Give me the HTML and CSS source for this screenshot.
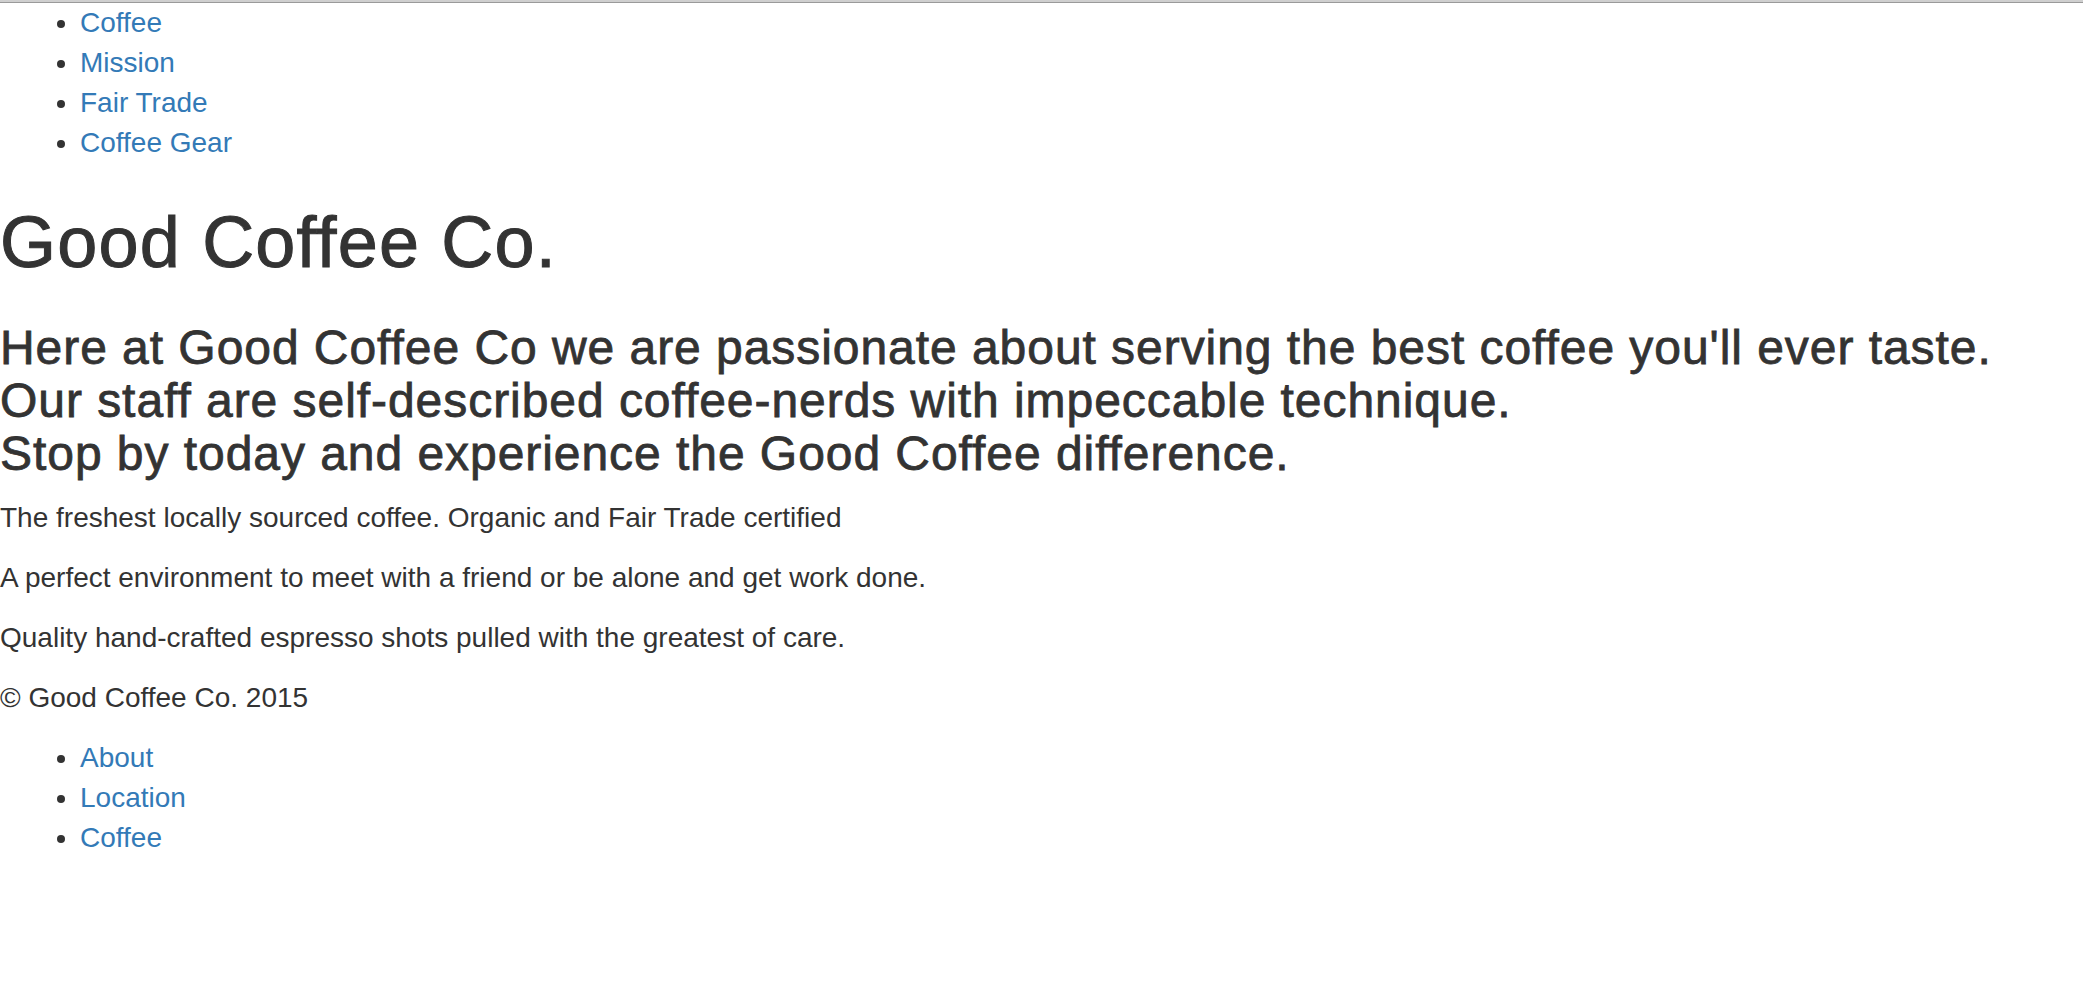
FILE: index.html
```html
<!DOCTYPE html>
<html lang="en">
<head>
<meta charset="utf-8">
<title>Good Coffee Co.</title>
<link rel="stylesheet" href="styles.css">
</head>
<body>
<div class="topline"></div>
<nav>
  <ul class="links">
    <li><a href="#">Coffee</a></li>
    <li><a href="#">Mission</a></li>
    <li><a href="#">Fair Trade</a></li>
    <li><a href="#">Coffee Gear</a></li>
  </ul>
</nav>
<header>
  <h1 class="title">Good Coffee Co.</h1>
  <h3 class="intro">Here at Good Coffee Co we are passionate about serving the best coffee you'll ever taste.<br>Our staff are self-described coffee-nerds with impeccable technique.<br>Stop by today and experience the Good Coffee difference.</h3>
</header>
<main>
  <p class="text">The freshest locally sourced coffee. Organic and Fair Trade certified</p>
  <p class="text">A perfect environment to meet with a friend or be alone and get work done.</p>
  <p class="text">Quality hand-crafted espresso shots pulled with the greatest of care.</p>
</main>
<footer>
  <p class="text">© Good Coffee Co. 2015</p>
  <ul class="links bottom">
    <li><a href="#">About</a></li>
    <li><a href="#">Location</a></li>
    <li><a href="#">Coffee</a></li>
  </ul>
</footer>
</body>
</html>
```

FILE: styles.css
```css
html, body {
  margin: 0;
  padding: 0;
  background: #fff;
}
body {
  font-family: "Liberation Sans", Arial, Helvetica, sans-serif;
  font-size: 28px;
  line-height: 40px;
  color: #333;
}
.topline {
  height: 2px;
  background: #cfcfcf;
  border-bottom: 1px solid #9a9a9a;
}
.links {
  margin: 0 0 20px 0;
  padding-left: 80px;
}
.links.bottom {
  margin-top: 0;
}
.links a {
  color: #337ab7;
  text-decoration: none;
}
.title {
  font-size: 72px;
  line-height: 1.1;
  font-weight: 400;
  -webkit-text-stroke: 1px #333;
  letter-spacing: 1.2px;
  margin: 40px 0 20px;
}
.intro {
  font-size: 48px;
  line-height: 1.1;
  font-weight: 400;
  -webkit-text-stroke: 0.8px #333;
  letter-spacing: 0.95px;
  margin: 40px 0 17px;
}
.text {
  margin: 0 0 20px;
}
```
